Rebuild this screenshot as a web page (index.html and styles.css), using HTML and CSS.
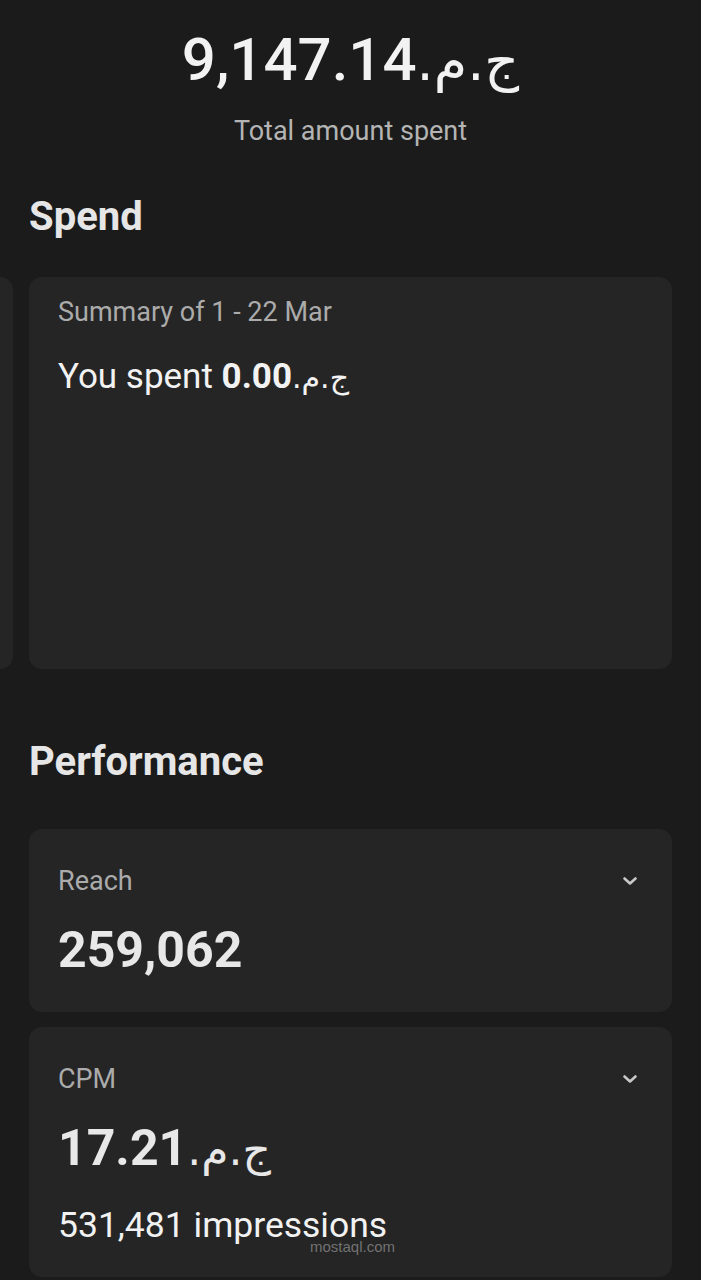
FILE: index.html
```html
<!DOCTYPE html>
<html lang="en">
<head>
  <meta charset="UTF-8">
  <meta name="viewport" content="width=device-width, initial-scale=1.0">
  <title>Ads summary</title>
  <link rel="stylesheet" href="styles.css">
</head>
<body>
  <div class="page">
    <!-- Total spent -->
    <header class="total">
      <div class="total-amount">9,147.14<span class="cur" dir="rtl">ج.م.</span></div>
      <div class="total-label">Total amount spent</div>
    </header>

    <!-- Spend carousel -->
    <section class="section">
      <h2 class="section-title">Spend</h2>
      <div class="carousel">
        <div class="card spend-card"></div>
        <div class="card spend-card">
          <div class="card-label">Summary of 1 - 22 Mar</div>
          <div class="spend-text">You spent <b>0.00<span class="cur" dir="rtl">ج.م.</span></b></div>
        </div>
      </div>
    </section>

    <!-- Performance -->
    <section class="section perf">
      <h2 class="section-title">Performance</h2>

      <div class="card metric">
        <div class="metric-head">
          <span class="card-label">Reach</span>
          <svg class="chevron" viewBox="0 0 14 8" width="14" height="8"><path d="M1.5 1.5 L7 6.5 L12.5 1.5" fill="none" stroke="#c8c8c8" stroke-width="2.6" stroke-linecap="round" stroke-linejoin="round"/></svg>
        </div>
        <div class="metric-value">259,062</div>
      </div>

      <div class="card metric">
        <div class="metric-head">
          <span class="card-label">CPM</span>
          <svg class="chevron" viewBox="0 0 14 8" width="14" height="8"><path d="M1.5 1.5 L7 6.5 L12.5 1.5" fill="none" stroke="#c8c8c8" stroke-width="2.6" stroke-linecap="round" stroke-linejoin="round"/></svg>
        </div>
        <div class="metric-value">17.21<span class="cur" dir="rtl">ج.م.</span></div>
        <div class="metric-sub">531,481 impressions</div>
        <span class="watermark">mostaql.com</span>
      </div>
    </section>
  </div>
</body>
</html>
```
FILE: styles.css
```css
/* Global */
html, body {
  margin: 0;
  padding: 0;
  background: #1b1b1b;
  overflow-x: hidden;
}

body {
  font-family: Roboto, "DejaVu Sans", sans-serif;
  color: #ececec;
}

.page {
  padding: 0 29px;
}

.cur {
  unicode-bidi: isolate;
  font-family: "DejaVu Sans", sans-serif;
  font-weight: normal;
}

/* Total header */
.total {
  text-align: center;
  padding-top: 24px;
}

.total-amount {
  font-size: 60px;
  line-height: 72px;
  font-weight: 500;
  color: #f2f2f2;
}

.total-amount .cur {
  font-size: 54px;
}

.total-label {
  margin-top: 18px;
  font-size: 27px;
  line-height: 30px;
  color: #b4b4b4;
}

/* Sections */
.section-title {
  margin: 0;
  font-size: 40px;
  line-height: 46px;
  font-weight: 700;
  color: #e6e6e6;
}

.section {
  margin-top: 48px;
}

.section.perf {
  margin-top: 70px;
}

/* Cards */
.card {
  background: #252525;
  border-radius: 13px;
  box-sizing: border-box;
}

.card-label {
  font-size: 27px;
  line-height: 30px;
  color: #ababab;
}

/* Spend carousel */
.carousel {
  display: flex;
  gap: 16px;
  margin-top: 37px;
  margin-left: -659px;
}

.spend-card {
  flex: 0 0 643px;
  height: 392px;
  padding: 20px 29px;
}

.spend-text {
  margin-top: 30px;
  font-size: 35px;
  line-height: 40px;
  color: #f2f2f2;
}

.spend-text .cur {
  font-size: 30px;
}

/* Metrics */
.metric {
  position: relative;
  padding: 37px 35px 32px 29px;
  margin-top: 44px;
}

.metric + .metric {
  margin-top: 15px;
}

.metric-head {
  display: flex;
  justify-content: space-between;
  align-items: center;
}

.chevron {
  display: block;
}

.metric-value {
  margin-top: 24px;
  font-size: 50px;
  line-height: 60px;
  font-weight: 700;
  color: #e8e8e8;
}

.metric-value .cur {
  font-size: 44px;
}

.metric-sub {
  margin-top: 25px;
  font-size: 35.5px;
  line-height: 40px;
  color: #f2f2f2;
}

.watermark {
  position: absolute;
  left: 281px;
  bottom: 22px;
  font-family: "Liberation Sans", sans-serif;
  font-size: 15px;
  color: rgba(150, 150, 150, 0.7);
}
```
